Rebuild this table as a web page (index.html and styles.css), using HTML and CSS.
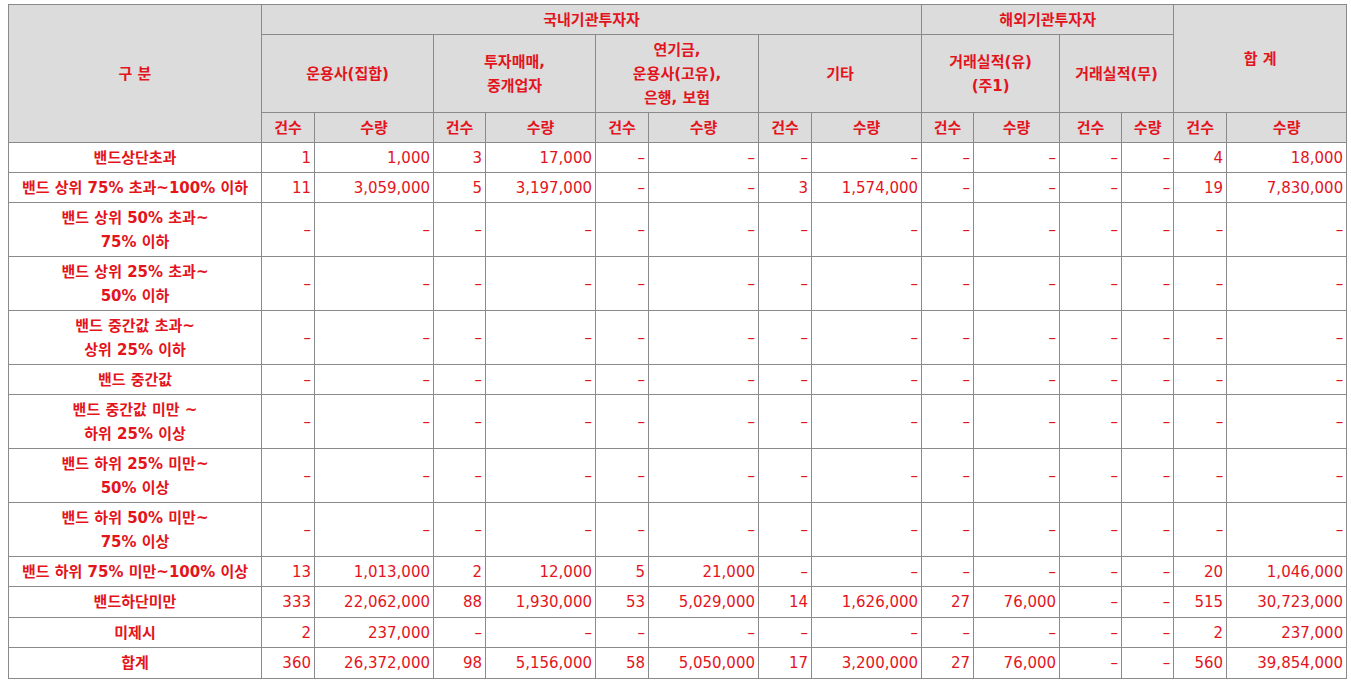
FILE: index.html
```html
<!DOCTYPE html>
<html lang="ko">
<head>
<meta charset="utf-8">
<title>수요예측 결과</title>
<link rel="stylesheet" href="styles.css">
</head>
<body>
<table class="grid">
<colgroup>
<col class="c-label"><col class="c53"><col class="c119"><col class="c52"><col class="c110"><col class="c53"><col class="c110"><col class="c53"><col class="c110"><col class="c52"><col class="c86"><col class="c62"><col class="c52"><col class="c53"><col class="c120">
</colgroup>
<thead>
<tr class="h1">
<th rowspan="3">구 분</th>
<th colspan="8">국내기관투자자</th>
<th colspan="4">해외기관투자자</th>
<th colspan="2" rowspan="2" class="total-head">합 계</th>
</tr>
<tr class="h2">
<th colspan="2">운용사(집합)</th>
<th colspan="2">투자매매,<br>중개업자</th>
<th colspan="2">연기금,<br>운용사(고유),<br>은행, 보험</th>
<th colspan="2">기타</th>
<th colspan="2">거래실적(유)<br>(주1)</th>
<th colspan="2">거래실적(무)</th>
</tr>
<tr class="h3">
<th>건수</th><th>수량</th><th>건수</th><th>수량</th><th>건수</th><th>수량</th><th>건수</th><th>수량</th><th>건수</th><th>수량</th><th>건수</th><th>수량</th><th>건수</th><th>수량</th>
</tr>
</thead>
<tbody>
<tr class="r1"><th>밴드상단초과</th><td>1</td><td>1,000</td><td>3</td><td>17,000</td><td>–</td><td>–</td><td>–</td><td>–</td><td>–</td><td>–</td><td>–</td><td>–</td><td>4</td><td>18,000</td></tr>
<tr class="r1"><th>밴드 상위 75% 초과~100% 이하</th><td>11</td><td>3,059,000</td><td>5</td><td>3,197,000</td><td>–</td><td>–</td><td>3</td><td>1,574,000</td><td>–</td><td>–</td><td>–</td><td>–</td><td>19</td><td>7,830,000</td></tr>
<tr class="r2"><th>밴드 상위 50% 초과~<br>75% 이하</th><td>–</td><td>–</td><td>–</td><td>–</td><td>–</td><td>–</td><td>–</td><td>–</td><td>–</td><td>–</td><td>–</td><td>–</td><td>–</td><td>–</td></tr>
<tr class="r2"><th>밴드 상위 25% 초과~<br>50% 이하</th><td>–</td><td>–</td><td>–</td><td>–</td><td>–</td><td>–</td><td>–</td><td>–</td><td>–</td><td>–</td><td>–</td><td>–</td><td>–</td><td>–</td></tr>
<tr class="r2"><th>밴드 중간값 초과~<br>상위 25% 이하</th><td>–</td><td>–</td><td>–</td><td>–</td><td>–</td><td>–</td><td>–</td><td>–</td><td>–</td><td>–</td><td>–</td><td>–</td><td>–</td><td>–</td></tr>
<tr class="r1"><th>밴드 중간값</th><td>–</td><td>–</td><td>–</td><td>–</td><td>–</td><td>–</td><td>–</td><td>–</td><td>–</td><td>–</td><td>–</td><td>–</td><td>–</td><td>–</td></tr>
<tr class="r2"><th>밴드 중간값 미만 ~<br>하위 25% 이상</th><td>–</td><td>–</td><td>–</td><td>–</td><td>–</td><td>–</td><td>–</td><td>–</td><td>–</td><td>–</td><td>–</td><td>–</td><td>–</td><td>–</td></tr>
<tr class="r2"><th>밴드 하위 25% 미만~<br>50% 이상</th><td>–</td><td>–</td><td>–</td><td>–</td><td>–</td><td>–</td><td>–</td><td>–</td><td>–</td><td>–</td><td>–</td><td>–</td><td>–</td><td>–</td></tr>
<tr class="r2"><th>밴드 하위 50% 미만~<br>75% 이상</th><td>–</td><td>–</td><td>–</td><td>–</td><td>–</td><td>–</td><td>–</td><td>–</td><td>–</td><td>–</td><td>–</td><td>–</td><td>–</td><td>–</td></tr>
<tr class="r1"><th>밴드 하위 75% 미만~100% 이상</th><td>13</td><td>1,013,000</td><td>2</td><td>12,000</td><td>5</td><td>21,000</td><td>–</td><td>–</td><td>–</td><td>–</td><td>–</td><td>–</td><td>20</td><td>1,046,000</td></tr>
<tr class="r1b"><th>밴드하단미만</th><td>333</td><td>22,062,000</td><td>88</td><td>1,930,000</td><td>53</td><td>5,029,000</td><td>14</td><td>1,626,000</td><td>27</td><td>76,000</td><td>–</td><td>–</td><td>515</td><td>30,723,000</td></tr>
<tr class="r1"><th>미제시</th><td>2</td><td>237,000</td><td>–</td><td>–</td><td>–</td><td>–</td><td>–</td><td>–</td><td>–</td><td>–</td><td>–</td><td>–</td><td>2</td><td>237,000</td></tr>
<tr class="r1b"><th>합계</th><td>360</td><td>26,372,000</td><td>98</td><td>5,156,000</td><td>58</td><td>5,050,000</td><td>17</td><td>3,200,000</td><td>27</td><td>76,000</td><td>–</td><td>–</td><td>560</td><td>39,854,000</td></tr>
</tbody>
</table>
</body>
</html>
```
FILE: styles.css
```css
html, body {
  background: #ffffff;
}
body {
  margin: 4px 0 0 8px;
  font-family: "DejaVu Sans", "Noto Sans CJK KR", sans-serif;
  font-size: 15px;
  color: #e3141c;
}
.grid {
  border-collapse: collapse;
  table-layout: fixed;
  width: 1338px;
  border: 1px solid #000000;
}
.c-label { width: 253px; }
.c52 { width: 52px; }
.c53 { width: 53px; }
.c62 { width: 62px; }
.c86 { width: 86px; }
.c110 { width: 110px; }
.c119 { width: 119px; }
.c120 { width: 120px; }
.grid th,
.grid td {
  border: 1px solid #8a8a8a;
  padding: 0 3px;
  line-height: 24px;
  white-space: nowrap;
  overflow: hidden;
}
.grid th {
  font-weight: 700;
}
.grid td {
  font-weight: 400;
}
.grid thead th {
  background: #dcdcdc;
  text-align: center;
  vertical-align: middle;
}
.grid tbody th {
  text-align: center;
  background: #ffffff;
}
.grid tbody td {
  text-align: right;
  padding-right: 3px;
}
.h1 { height: 30px; }
.h2 { height: 78px; }
.h3 { height: 30px; }
.r1 { height: 30px; }
.r1b { height: 31px; }
.r2 { height: 54px; }
.total-head {
  padding-bottom: 30px;
}
```
